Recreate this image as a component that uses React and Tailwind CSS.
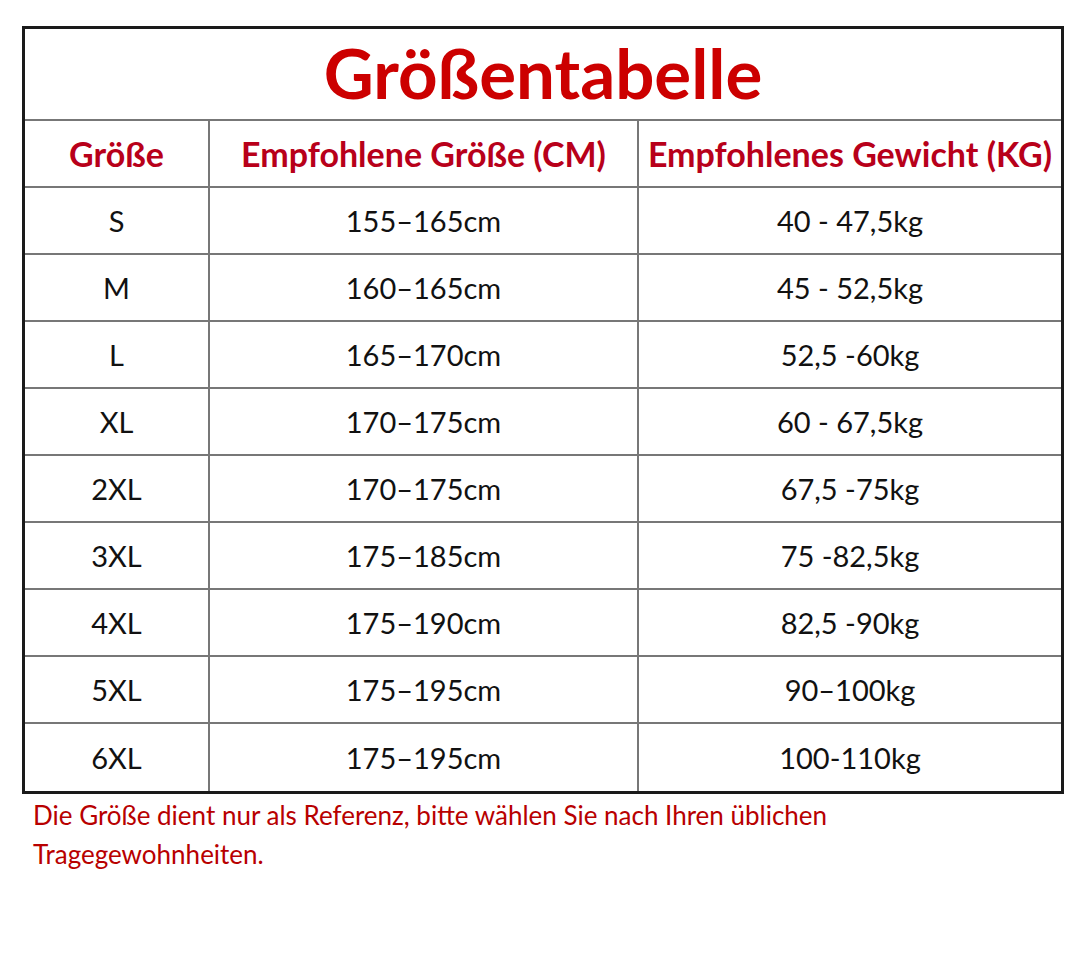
import React from "react";

const rows = [
  ["S", "155–165cm", "40 - 47,5kg"],
  ["M", "160–165cm", "45 - 52,5kg"],
  ["L", "165–170cm", "52,5 -60kg"],
  ["XL", "170–175cm", "60 - 67,5kg"],
  ["2XL", "170–175cm", "67,5 -75kg"],
  ["3XL", "175–185cm", "75 -82,5kg"],
  ["4XL", "175–190cm", "82,5 -90kg"],
  ["5XL", "175–195cm", "90–100kg"],
  ["6XL", "175–195cm", "100-110kg"],
];

const font = { fontFamily: "Lato, 'Open Sans', sans-serif" };

export default function App() {
  return (
    <div className="w-[1090px] h-[976px] bg-white pt-[26px] pl-[22px]" style={font}>
      <div className="w-[1042px] border-[3px] border-[#1a1a1a]">
        <div className="h-[92px] flex items-center justify-center border-b-2 border-[#777]">
          <h1 className="text-[69px] font-bold text-[#cc0000] leading-none pb-1">Größentabelle</h1>
        </div>
        <div className="grid grid-cols-[185px_429px_1fr] h-[67px] border-b-2 border-[#777] text-[34px] font-bold text-[#b8001a]">
          <div className="flex items-center justify-center border-r-2 border-[#777]">Größe</div>
          <div className="flex items-center justify-center border-r-2 border-[#777]">Empfohlene Größe (CM)</div>
          <div className="flex items-center justify-center">Empfohlenes Gewicht (KG)</div>
        </div>
        {rows.map((r, i) => (
          <div
            key={i}
            className={`grid grid-cols-[185px_429px_1fr] h-[67px] text-[29px] text-[#111] ${i < rows.length - 1 ? "border-b-2 border-[#777]" : ""}`}
          >
            <div className="flex items-center justify-center border-r-2 border-[#777]">{r[0]}</div>
            <div className="flex items-center justify-center border-r-2 border-[#777]">{r[1]}</div>
            <div className="flex items-center justify-center">{r[2]}</div>
          </div>
        ))}
      </div>
      <p className="mt-[2px] ml-[11px] text-[26px] leading-[39px] text-[#b80000] w-[860px]">
        Die Größe dient nur als Referenz, bitte wählen Sie nach Ihren üblichen Tragegewohnheiten.
      </p>
    </div>
  );
}
